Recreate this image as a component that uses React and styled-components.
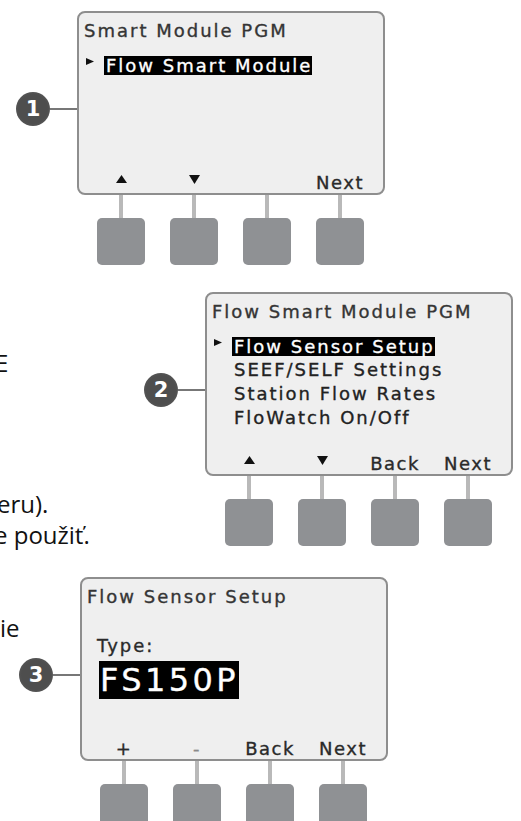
import React from "react";
import styled, { createGlobalStyle } from "styled-components";

const Global = createGlobalStyle`
  html, body { margin: 0; padding: 0; background: #ffffff; }
  body { width: 521px; height: 821px; overflow: hidden; }
`;

const Page = styled.main`
  box-sizing: border-box;
  width: 521px;
  height: 821px;
  overflow: hidden;
  padding-top: 11px;
  display: flex;
  flex-direction: column;
  gap: 27px;
  background: #ffffff;
`;

const Band = styled.section`
  display: flex;
  align-items: flex-start;
`;

const SideText = styled.div`
  flex: none;
  width: ${(p) => p.$width}px;
  padding-top: ${(p) => p.$top}px;
  font-family: "Open Sans", "Noto Sans", sans-serif;
  font-size: 24px;
  line-height: 31px;
  color: #111111;
  white-space: nowrap;
`;

const TextLine = styled.div`
  margin-left: ${(p) => p.$shift || 0}px;
  margin-top: ${(p) => p.$gap || 0}px;
`;

const Figure = styled.figure`
  margin: 0 0 0 ${(p) => p.$indent || 0}px;
  flex: none;
  display: flex;
  align-items: flex-start;
`;

const Callout = styled.div`
  display: flex;
  align-items: center;
  margin-top: 81px;
`;

const Badge = styled.div`
  width: 34px;
  height: 34px;
  border-radius: 50%;
  background: radial-gradient(circle, #4e4e4e 0 60%, #666666 100%);
  color: #ffffff;
  font-family: "DejaVu Sans", sans-serif;
  font-weight: bold;
  font-size: 21px;
  display: flex;
  align-items: center;
  justify-content: center;
`;

const Leader = styled.div`
  width: 27px;
  height: 2px;
  background: #777777;
`;

const Device = styled.div`
  width: 308px;
  display: flex;
  flex-direction: column;
`;

const Screen = styled.div`
  box-sizing: border-box;
  height: 184px;
  border: 2px solid #8e8e8e;
  border-radius: 8px;
  background: #efefef;
  padding: 6px 0 0 5px;
  display: flex;
  flex-direction: column;
  font-family: "DejaVu Sans", "Verdana", sans-serif;
  font-size: 18px;
  letter-spacing: 2px;
  color: #2a2a2a;
  -webkit-text-stroke: 0.35px currentColor;
`;

const Title = styled.div`
  line-height: 24px;
  color: #353535;
  white-space: nowrap;
`;

const Menu = styled.div`
  margin-top: 10px;
  display: flex;
  flex-direction: column;
`;

const MenuRow = styled.div`
  height: 24px;
  display: flex;
  align-items: center;
  white-space: nowrap;
`;

const MarkerCell = styled.div`
  width: 20px;
  height: 24px;
  flex: none;
  display: flex;
  align-items: flex-start;
  padding-left: 2px;
  box-sizing: border-box;
  svg { margin-top: 5px; }
`;

const Item = styled.span`
  line-height: 24px;
  padding-left: 2px;
  color: #222222;
`;

const Highlight = styled.span`
  display: inline-block;
  line-height: 19px;
  background: #000000;
  color: #ffffff;
  padding: 0 0 0 2px;
`;

const FieldLabel = styled.div`
  margin: 25px 0 0 10px;
  line-height: 24px;
  color: #2a2a2a;
`;

const BigValue = styled.div`
  align-self: flex-start;
  margin: 3px 0 0 12px;
  height: 38px;
  line-height: 38px;
  font-size: 32px;
  letter-spacing: 3.4px;
  background: #000000;
  color: #ffffff;
  padding: 0 0 0 1px;
`;

const SoftLabels = styled.div`
  margin: auto 0 0 13px;
  display: flex;
  gap: 25px;
  height: 20px;
`;

const SoftLabel = styled.div`
  width: 48px;
  height: 20px;
  line-height: 20px;
  display: flex;
  justify-content: center;
  align-items: flex-start;
  white-space: nowrap;
  letter-spacing: 1.5px;
  color: ${(p) => (p.$faint ? "#8a8a8a" : "#2a2a2a")};
  svg { margin-top: 2px; }
`;

const Keys = styled.div`
  display: flex;
  gap: 25px;
  padding-left: 20px;
`;

const Key = styled.div`
  width: 48px;
  display: flex;
  flex-direction: column;
  align-items: center;
`;

const Stem = styled.div`
  width: 4px;
  height: 23px;
  background: #b9b9b9;
`;

const Cap = styled.div`
  width: 48px;
  height: 47px;
  border-radius: 5px;
  background: #8f9194;
`;

const Pointer = () => (
  <svg width="8" height="7" viewBox="0 0 8 7">
    <polygon points="0,0 8,3.5 0,7" fill="#111" />
  </svg>
);

const Up = () => (
  <svg width="11" height="8" viewBox="0 0 11 8">
    <polygon points="5.5,0 11,8 0,8" fill="#111" />
  </svg>
);

const Down = () => (
  <svg width="11" height="9" viewBox="0 0 11 9">
    <polygon points="0,0 11,0 5.5,9" fill="#111" />
  </svg>
);

const labelContent = (l) => {
  if (l === "up") return <Up />;
  if (l === "down") return <Down />;
  return l;
};

function Controller({ number, indent, labels, children }) {
  return (
    <Figure $indent={indent}>
      <Callout>
        <Badge>{number}</Badge>
        <Leader />
      </Callout>
      <Device>
        <Screen>
          {children}
          <SoftLabels>
            {labels.map((l, i) => (
              <SoftLabel key={i} $faint={l === "-"}>
                {labelContent(l)}
              </SoftLabel>
            ))}
          </SoftLabels>
        </Screen>
        <Keys>
          {labels.map((_, i) => (
            <Key key={i}>
              <Stem />
              <Cap />
            </Key>
          ))}
        </Keys>
      </Device>
    </Figure>
  );
}

function MenuScreen({ title, items }) {
  return (
    <>
      <Title>{title}</Title>
      <Menu>
        {items.map((it, i) => (
          <MenuRow key={it}>
            <MarkerCell>{i === 0 && <Pointer />}</MarkerCell>
            {i === 0 ? <Highlight>{it}</Highlight> : <Item>{it}</Item>}
          </MenuRow>
        ))}
      </Menu>
    </>
  );
}

export default function App() {
  return (
    <>
      <Global />
      <Page>
        <Controller number="1" indent={16} labels={["up", "down", "", "Next"]}>
          <MenuScreen title="Smart Module PGM" items={["Flow Smart Module"]} />
        </Controller>

        <Band>
          <SideText $width={144} $top={55}>
            <TextLine $shift={-5}>E</TextLine>
            <TextLine $shift={-3} $gap={110}>eru).</TextLine>
            <TextLine $shift={-6}>e použiť.</TextLine>
          </SideText>
          <Controller number="2" labels={["up", "down", "Back", "Next"]}>
            <MenuScreen
              title="Flow Smart Module PGM"
              items={[
                "Flow Sensor Setup",
                "SEEF/SELF Settings",
                "Station Flow Rates",
                "FloWatch On/Off",
              ]}
            />
          </Controller>
        </Band>

        <Band>
          <SideText $width={19} $top={35}>
            <TextLine>ie</TextLine>
          </SideText>
          <Controller number="3" labels={["+", "-", "Back", "Next"]}>
            <Title>Flow Sensor Setup</Title>
            <FieldLabel>Type:</FieldLabel>
            <BigValue>FS150P</BigValue>
          </Controller>
        </Band>
      </Page>
    </>
  );
}
